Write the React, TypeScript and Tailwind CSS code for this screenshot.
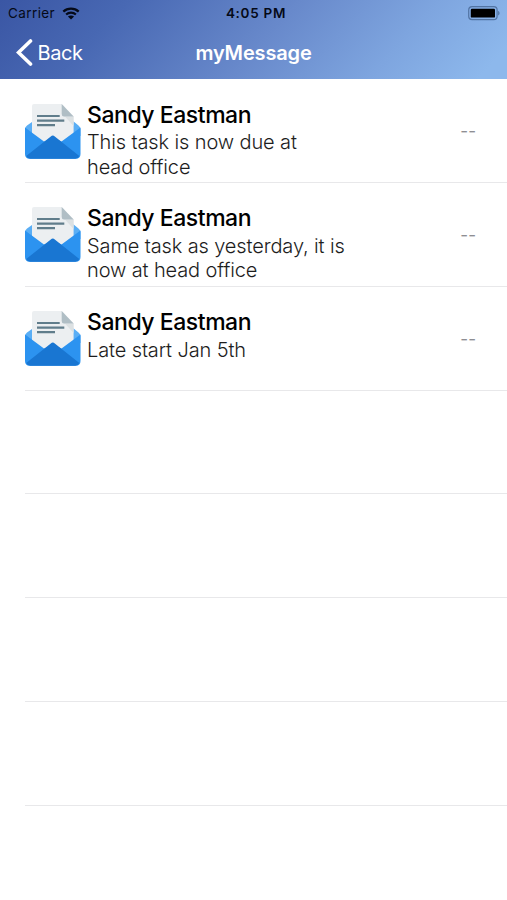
const MESSAGES = [
  {
    id: 1,
    sender: 'Sandy Eastman',
    lines: ['This task is now due at', 'head office'],
    date: '--',
  },
  {
    id: 2,
    sender: 'Sandy Eastman',
    lines: ['Same task as yesterday, it is', 'now at head office'],
    date: '--',
  },
  { id: 3, sender: 'Sandy Eastman', lines: ['Late start Jan 5th'], date: '--' },
];

const EMPTY_ROWS = [4, 5, 6, 7];

function WifiIcon() {
  return (
    <svg width="18" height="14" viewBox="0 0 18 14" fill="none">
      <path
        d="M1.3 4.6C5.6.6 12.4.6 16.7 4.6M4.1 7.5C6.9 5 11.1 5 13.9 7.5"
        stroke="#050a18"
        strokeWidth="2.2"
      />
      <path d="M5.9 9.6C7.7 8.1 10.3 8.1 12.1 9.6L9 12.6Z" fill="#050a18" />
    </svg>
  );
}

function BatteryIcon() {
  return (
    <svg width="33" height="15" viewBox="0 0 33 15" fill="none">
      <rect x="0.7" y="0.7" width="28.4" height="13" rx="3.4" stroke="#5274a3" strokeWidth="1.2" />
      <rect x="2.8" y="2.8" width="24.2" height="8.8" rx="1.2" fill="#000" />
      <path d="M30.3 5C31.8 5.5 31.8 8.9 30.3 9.4Z" fill="#45658f" />
    </svg>
  );
}

function EnvelopeIcon() {
  return (
    <svg width="56" height="55" viewBox="0 0 56 55" className="shrink-0">
      <path d="M7 18L2 21.5Q0 23 0 25V32H55.5V25Q55.5 23 53.5 21.5L48 17Z" fill="#5aaef5" />
      <path d="M7 2Q7 0 9 0H36.7L48.6 12.5V42H7Z" fill="#eceff1" />
      <path d="M36.7 9L48.6 22V12.5H39Z" fill="#dce1e3" />
      <path d="M36.7 0L48.6 12.5H39Q36.7 12.5 36.7 10Z" fill="#b0bec5" />
      <path d="M12 12H34.7M12 16.6H39.3M12 21.2H30" stroke="#607d8b" strokeWidth="2.2" />
      <path d="M0 23.5L19 37.5L28 34L36.5 37.5L55.5 23.5V50Q55.5 54.7 50.8 54.7H4.7Q0 54.7 0 50Z" fill="#2c93f0" />
      <path d="M1.2 52L25.8 32.4Q27.8 30.8 29.8 32.4L54.3 52Q53 54.7 50.2 54.7H5.3Q2.5 54.7 1.2 52Z" fill="#1976d2" />
    </svg>
  );
}

function Header() {
  return (
    <header className="h-[79px] bg-[linear-gradient(132deg,#3a56a4_0%,#4868b3_22%,#6889cb_52%,#7ea5df_76%,#8db8ec_95%)]">
      <div className="grid h-[27px] grid-cols-3 items-center pr-[6px] pl-[8px] text-[13.5px] text-[#050a18]">
        <div className="flex items-center gap-[7px]">
          <span className="tracking-[0.4px]">Carrier</span>
          <WifiIcon />
        </div>
        <span className="pl-[3px] text-center font-semibold tracking-[0.7px]">4:05 PM</span>
        <div className="flex justify-end">
          <BatteryIcon />
        </div>
      </div>
      <nav className="grid h-[51px] grid-cols-[1fr_auto_1fr] items-center text-[20px] text-white">
        <button type="button" className="flex items-center gap-[4.5px] pl-[16px]">
          <svg width="17" height="27" viewBox="0 0 17 27" fill="none">
            <path d="M14.5 2L2.5 13.5L14.5 25" stroke="#fff" strokeWidth="3.6" strokeLinecap="round" />
          </svg>
          <span className="tracking-[-0.4px]">Back</span>
        </button>
        <h1 className="font-semibold tracking-[-0.15px]">myMessage</h1>
      </nav>
    </header>
  );
}

export default function App() {
  return (
    <div className="h-[900px] overflow-hidden bg-white font-[Inter,sans-serif]">
      <Header />
      <ul className="pt-[0.3px]">
        {MESSAGES.map((message) => (
          <li key={message.id} className="h-[103.8px] pl-[25px]">
            <div className="flex h-full border-b border-[#e8e8ea] pt-[24.4px]">
              <EnvelopeIcon />
              <div className="ml-[6px] flex-1">
                <h2 className="text-[23px] leading-[22px] font-medium tracking-[-0.45px] text-black">
                  {message.sender}
                </h2>
                <div className="mt-[4.4px] text-[20px] leading-[24.5px] font-light tracking-[-0.12px] text-[#1d1d1d]">
                  {message.lines.map((line) => (
                    <p key={line}>{line}</p>
                  ))}
                </div>
              </div>
              <span className="mt-[15.7px] mr-[31px] text-[17px] leading-[24px] text-[#8e8e93]">
                {message.date}
              </span>
            </div>
          </li>
        ))}
        {EMPTY_ROWS.map((row) => (
          <li key={row} className="h-[103.8px] pl-[25px]">
            <div className="h-full border-b border-[#e8e8ea]" />
          </li>
        ))}
      </ul>
    </div>
  );
}
